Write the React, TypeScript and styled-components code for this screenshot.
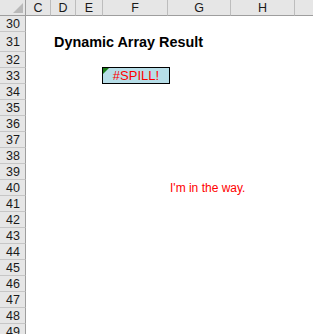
import React from 'react'
import styled, { createGlobalStyle } from 'styled-components'

const GlobalStyle = createGlobalStyle`
  html, body {
    margin: 0;
    padding: 0;
    background: #ffffff;
    overflow: hidden;
  }
  body {
    font-family: "Liberation Sans", Arial, sans-serif;
  }
`

const columns = [
  { name: 'C', width: 25 },
  { name: 'D', width: 25 },
  { name: 'E', width: 27 },
  { name: 'F', width: 65 },
  { name: 'G', width: 63 },
  { name: 'H', width: 64 },
  { name: '', width: 40 },
]

const rows = Array.from({ length: 20 }, (_, i) => ({
  num: 30 + i,
  height: 30 + i === 31 ? 20 : 16,
}))

const Sheet = styled.div<{ $cols: string; $rows: string }>`
  display: grid;
  grid-template-columns: 26px ${p => p.$cols};
  grid-template-rows: 16px ${p => p.$rows};
  width: 313px;
  height: 334px;
  overflow: hidden;
  background: #ffffff;
`

const Corner = styled.div`
  position: relative;
  background: #e6e6e6;
  border-right: 1px solid #9e9e9e;
  border-bottom: 1px solid #9e9e9e;
  box-sizing: border-box;

  &::after {
    content: '';
    position: absolute;
    right: 2px;
    bottom: 2px;
    width: 0;
    height: 0;
    border-left: 10px solid transparent;
    border-bottom: 10px solid #b9b9b9;
  }
`

const ColHeader = styled.div`
  display: flex;
  align-items: center;
  justify-content: center;
  background: #e6e6e6;
  border-right: 1px solid #bdbdbd;
  border-bottom: 1px solid #9e9e9e;
  box-sizing: border-box;
  font-size: 12.5px;
  color: #1a1a1a;
  padding-top: 1px;
`

const RowHeader = styled.div<{ $row: number }>`
  grid-column: 1;
  grid-row: ${p => p.$row};
  display: flex;
  align-items: center;
  justify-content: center;
  background: #e6e6e6;
  border-right: 1px solid #9e9e9e;
  border-bottom: 1px solid #c6c6c6;
  box-sizing: border-box;
  font-size: 12.5px;
  color: #1a1a1a;
  padding-left: 1px;
`

const Title = styled.div<{ $row: number; $col: number }>`
  grid-row: ${p => p.$row};
  grid-column: ${p => p.$col} / span 4;
  display: flex;
  align-items: center;
  padding-left: 3px;
  font-size: 14.4px;
  font-weight: bold;
  color: #000000;
  white-space: nowrap;
`

const SpillCell = styled.div<{ $row: number; $col: number }>`
  grid-row: ${p => p.$row};
  grid-column: ${p => p.$col};
  position: relative;
  margin: -1px -2px 0 -1px;
  display: flex;
  align-items: center;
  justify-content: center;
  background: #b7dee8;
  border: 1px solid #000000;
  font-size: 13px;
  color: #ff0000;

  &::before {
    content: '';
    position: absolute;
    left: 0;
    top: 0;
    width: 0;
    height: 0;
    border-top: 6px solid #1b7d1b;
    border-right: 6px solid transparent;
  }
`

const CellText = styled.div<{ $row: number; $col: number; $color: string }>`
  grid-row: ${p => p.$row};
  grid-column: ${p => p.$col} / span 2;
  display: flex;
  align-items: center;
  padding-left: 2px;
  font-size: 12px;
  color: ${p => p.$color};
  white-space: nowrap;
`

const gridRowOf = (num: number) => num - 30 + 2

const App = () => {
  return (
    <>
      <GlobalStyle />
      <Sheet
        $cols={columns.map(c => `${c.width}px`).join(' ')}
        $rows={rows.map(r => `${r.height}px`).join(' ')}
      >
        <Corner />
        {columns.map((col, i) => (
          <ColHeader key={i}>{col.name}</ColHeader>
        ))}
        {rows.map(row => (
          <RowHeader key={row.num} $row={gridRowOf(row.num)}>
            {row.num}
          </RowHeader>
        ))}
        <Title $row={gridRowOf(31)} $col={3}>
          Dynamic Array Result
        </Title>
        <SpillCell $row={gridRowOf(33)} $col={5}>
          #SPILL!
        </SpillCell>
        <CellText $row={gridRowOf(40)} $col={6} $color="#ff0000">
          I'm in the way.
        </CellText>
      </Sheet>
    </>
  )
}

export default App
